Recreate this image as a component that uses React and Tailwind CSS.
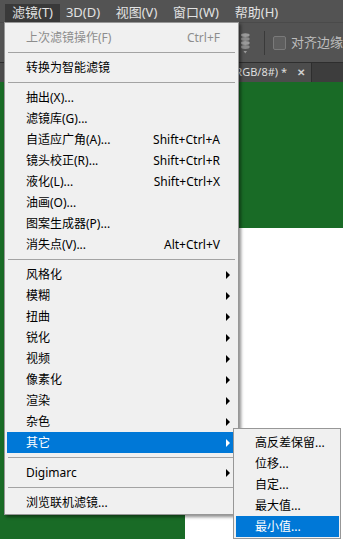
import React from "react";

// Filter menu entries, in order. "sep" draws a divider line.
const filterMenu = [
  { label: "上次滤镜操作(F)", shortcut: "Ctrl+F", disabled: true },
  { sep: true },
  { label: "转换为智能滤镜" },
  { sep: true },
  { label: "抽出(X)..." },
  { label: "滤镜库(G)..." },
  { label: "自适应广角(A)...", shortcut: "Shift+Ctrl+A" },
  { label: "镜头校正(R)...", shortcut: "Shift+Ctrl+R" },
  { label: "液化(L)...", shortcut: "Shift+Ctrl+X" },
  { label: "油画(O)..." },
  { label: "图案生成器(P)..." },
  { label: "消失点(V)...", shortcut: "Alt+Ctrl+V" },
  { sep: true },
  { label: "风格化", sub: true },
  { label: "模糊", sub: true },
  { label: "扭曲", sub: true },
  { label: "锐化", sub: true },
  { label: "视频", sub: true },
  { label: "像素化", sub: true },
  { label: "渲染", sub: true },
  { label: "杂色", sub: true },
  { label: "其它", sub: true, active: true },
  { sep: true },
  { label: "Digimarc", sub: true },
  { sep: true },
  { label: "浏览联机滤镜..." },
];

const otherMenu = [
  { label: "高反差保留..." },
  { label: "位移..." },
  { label: "自定..." },
  { label: "最大值..." },
  { label: "最小值...", active: true },
];

const menuBar = [
  { label: "滤镜(T)", w: "w-[55px]", open: true },
  { label: "3D(D)", w: "w-[46px]" },
  { label: "视图(V)", w: "w-[61px]" },
  { label: "窗口(W)", w: "w-[58px]" },
  { label: "帮助(H)", w: "w-[63px]" },
];

const Arrow = ({ white }) => (
  <span
    className={`block w-0 h-0 border-y-[4px] border-y-transparent border-l-[4px] ${
      white ? "border-l-white" : "border-l-black"
    }`}
  />
);

const MenuRow = ({ item }) => {
  const color = item.active
    ? "bg-[#0078d7] text-white"
    : item.disabled
    ? "text-[#8d8d8d]"
    : "text-black";
  return (
    <div className={`flex items-center h-[21px] ml-[2px] mr-[1px] pl-[19px] ${color}`}>
      <span className="flex-1 whitespace-nowrap">{item.label}</span>
      {item.shortcut && <span className="whitespace-nowrap">{item.shortcut}</span>}
      <span className="w-[17px] flex items-center pl-[6px]">
        {item.sub && <Arrow white={item.active} />}
      </span>
    </div>
  );
};

const Separator = () => (
  <div className="h-[9px] flex items-center mx-[3px]">
    <div className="w-full border-t border-[#a3a3a3]" />
  </div>
);

const StackIcon = () => (
  <svg width="12" height="26" viewBox="0 0 12 26" fill="none">
    <ellipse cx="6" cy="4" rx="5" ry="2.2" fill="#9a9a9a" />
    <ellipse cx="6" cy="8.5" rx="5" ry="2.2" fill="#8a8a8a" />
    <ellipse cx="6" cy="13" rx="5" ry="2.2" fill="#9a9a9a" />
    <ellipse cx="6" cy="17.5" rx="5" ry="2.2" fill="#8a8a8a" />
    <path d="M4 22h4l-2 3z" fill="#9a9a9a" />
  </svg>
);

export default function App() {
  return (
    <div
      className="relative w-[343px] h-[539px] overflow-hidden bg-[#535353] flex flex-col text-[12px]"
      style={{ fontFamily: '"Noto Sans", "Noto Sans CJK SC", sans-serif' }}
    >
      {/* menu bar */}
      <div className="h-[22px] shrink-0 flex items-start pt-[4px] pl-[5px] text-[13px] text-[#e2e2e2]">
        {menuBar.map((m) => (
          <div
            key={m.label}
            className={`${m.w} h-[18px] flex items-center justify-center whitespace-nowrap ${
              m.open ? "bg-[#393939]" : ""
            }`}
          >
            {m.label}
          </div>
        ))}
      </div>

      {/* options toolbar */}
      <div className="h-[40px] shrink-0 flex items-center pl-[240px] bg-[#535353] border-t border-[#4a4a4a]">
        <StackIcon />
        <div className="ml-[13px] w-[1px] h-[24px] bg-[#3a3a3a]" />
        <div className="ml-[9px] w-[14px] h-[14px] rounded-[2px] bg-[#5f5f5f] border border-[#7a7a7a]" />
        <span className="ml-[5px] text-[13px] text-[#bdbdbd] whitespace-nowrap">对齐边缘</span>
      </div>

      {/* document tabs */}
      <div className="h-[20px] shrink-0 flex bg-[#3d3d3d] border-t border-[#2e2e2e]">
        <div className="w-[312px] h-full bg-[#4c4c4c] flex items-center justify-end pr-[6px] text-[11px] text-[#dedede] border-r border-[#2e2e2e]">
          <span className="whitespace-nowrap">xxx @ 66.7% (RGB/8#) *</span>
          <span className="ml-[10px] text-[10px] font-bold text-[#cfcfcf]">✕</span>
        </div>
      </div>

      {/* canvas */}
      <div className="flex-1 flex flex-col bg-[#196b26]">
        <div className="h-[146px] shrink-0" />
        <div className="flex-1 flex">
          <div className="w-[185px] shrink-0" />
          <div className="flex-1 bg-white" />
        </div>
      </div>

      {/* Filter dropdown */}
      <div className="absolute left-[4px] top-[22px] w-[235px] bg-[#f0f0f0] border border-[#979797] pt-[4px] pb-[1px] shadow-[2px_2px_3px_rgba(0,0,0,0.45)]">
        {filterMenu.map((item, i) =>
          item.sep ? <Separator key={i} /> : <MenuRow key={i} item={item} />
        )}
      </div>

      {/* 其它 submenu */}
      <div className="absolute left-[233px] top-[428px] w-[108px] bg-[#f0f0f0] border border-[#979797] pt-[3px] pb-[1px]">
        {otherMenu.map((item, i) => (
          <MenuRow key={i} item={item} />
        ))}
      </div>
    </div>
  );
}
